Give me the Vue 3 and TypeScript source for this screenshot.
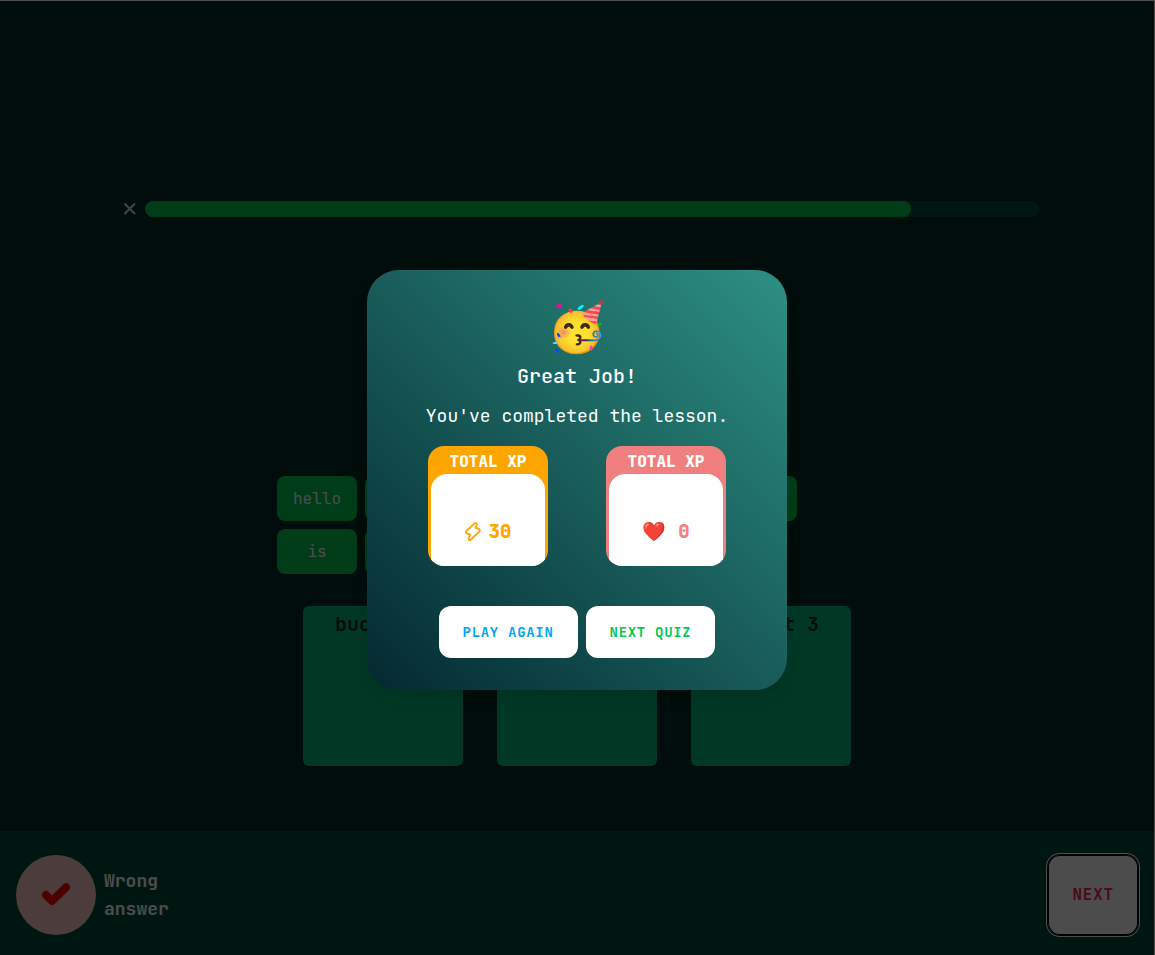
<script setup lang="ts">
import { ref } from 'vue'

interface Stat {
  id: string
  label: string
  value: number
  tone: 'xp' | 'hearts'
}

const words = ref<string[]>(['hello', 'world', 'my', 'name', 'a', 'the', 'is', 'good'])
const buckets = ref<string[]>(['bucket 1', 'bucket 2', 'bucket 3'])
const answered = ref(6)
const questionCount = 7
const stats: Stat[] = [
  { id: 'xp', label: 'TOTAL XP', value: 30, tone: 'xp' },
  { id: 'hearts', label: 'TOTAL XP', value: 0, tone: 'hearts' },
]
</script>

<template>
  <div class="page">
    <header class="progress">
      <button class="close" type="button" aria-label="Close lesson">
        <svg width="14" height="14" viewBox="0 0 14 14" aria-hidden="true">
          <path d="M1.500 1.500 12 12M12 1.500 1.500 12" />
        </svg>
      </button>
      <div class="track" role="progressbar" :aria-valuenow="answered" :aria-valuemax="questionCount">
        <div class="fill" :style="{ width: (answered / questionCount) * 100 + '%' }"></div>
      </div>
    </header>

    <main class="board">
      <div class="words">
        <button v-for="word in words" :key="word" class="word" type="button">{{ word }}</button>
      </div>
      <div class="buckets">
        <section v-for="bucket in buckets" :key="bucket" class="bucket">{{ bucket }}</section>
      </div>
    </main>

    <footer class="result">
      <span class="badge">
        <svg width="32" height="32" viewBox="0 0 32 32" aria-hidden="true">
          <path d="M6 16 12 22 26 8.300" />
        </svg>
      </span>
      <p class="verdict">Wrong answer</p>
      <button class="next" type="button">NEXT</button>
    </footer>

    <div class="overlay">
      <div class="modal" role="dialog" aria-modal="true" aria-labelledby="modal-title">
        <div class="party">🥳</div>
        <h1 id="modal-title" class="title">Great Job!</h1>
        <p class="subtitle">You've completed the lesson.</p>
        <div class="stats">
          <div v-for="stat in stats" :key="stat.id" class="stat" :class="stat.tone">
            <h2 class="stat-label">{{ stat.label }}</h2>
            <div class="stat-value">
              <svg v-if="stat.tone === 'xp'" class="bolt" width="16" height="20" viewBox="0 0 16 20" aria-hidden="true">
                <path d="M9.700 1.300 1.200 9Q.1 10.300 1.400 11.200L5.100 12.700 3.700 16.800Q3.700 18.900 5.500 17.900L14.500 9.300Q15.500 8 14.200 7.200L10.600 5.700 11.900 2.500Q11.700 .2 9.700 1.300Z" />
              </svg>
              <span v-else class="heart">❤️</span>
              <span>{{ stat.value }}</span>
            </div>
          </div>
        </div>
        <div class="actions">
          <button class="action again" type="button">PLAY AGAIN</button>
          <button class="action quiz" type="button">NEXT QUIZ</button>
        </div>
      </div>
    </div>
  </div>
</template>

<style>
body {
  margin: 0;
}
</style>

<style scoped>
.page {
  position: relative;
  box-sizing: border-box;
  display: flex;
  flex-direction: column;
  min-height: 100vh;
  border-top: 1px solid #fff;
  border-right: 1px solid #fff;
  background: #002c22;
  color: #fff;
  font-family: 'JetBrains Mono', 'DejaVu Sans Mono', 'Noto Color Emoji', monospace;
}

button {
  border: 0;
  font-family: inherit;
  cursor: pointer;
}

.progress {
  display: flex;
  align-items: center;
  width: 80%;
  height: 16px;
  margin: 200px auto 0;
}

.close {
  display: grid;
  place-items: center;
  width: 30px;
  padding: 0;
  background: none;
}

.close path {
  fill: none;
  stroke: #e5e5e5;
  stroke-width: 2;
}

.track {
  flex: 1;
  height: 16px;
  border-radius: 8px;
  background: #004f3b;
}

.fill {
  height: 100%;
  border-radius: 8px;
  background: #00c951;
}

.board {
  display: flex;
  flex-direction: column;
  align-items: center;
  gap: 32px;
  margin-top: 259px;
}

.words {
  display: flex;
  flex-wrap: wrap;
  gap: 8px;
  width: 600px;
}

.word {
  width: 80px;
  height: 45px;
  padding: 0;
  border-radius: 8px;
  background: #00c951;
  color: #fff;
  font-size: 16px;
}

.buckets {
  display: flex;
  gap: 34px;
}

.bucket {
  box-sizing: border-box;
  width: 160px;
  height: 160px;
  padding-top: 4px;
  border-radius: 6px;
  background: #00bc7d;
  color: #002c22;
  font-size: 20px;
  font-weight: 700;
  line-height: 28px;
  text-align: center;
}

.result {
  display: flex;
  align-items: center;
  gap: 8px;
  margin-top: auto;
  padding: 24px 16px 20px;
  background: #004f3b;
}

.badge {
  display: grid;
  place-items: center;
  width: 80px;
  height: 80px;
  border-radius: 50%;
  background: #ffc9c9;
}

.badge path {
  fill: none;
  stroke: #f00;
  stroke-width: 8;
  stroke-linecap: round;
  stroke-linejoin: round;
}

.verdict {
  width: 72px;
  margin: 0;
  font-size: 18px;
  font-weight: 700;
  line-height: 28px;
}

.next {
  height: 80px;
  margin-left: auto;
  padding: 0 24px 2px;
  border-radius: 12px;
  background: #fff;
  box-shadow: inset 0 0 0 1px #000, 0 0 0 1px #000, 0 0 0 2px #fff;
  color: #ff2056;
  font-size: 16px;
  font-weight: 700;
  letter-spacing: 0.05em;
}

.overlay {
  position: absolute;
  inset: -1px -1px 0 0;
  display: flex;
  align-items: center;
  justify-content: center;
  padding: 5px 1px 0 0;
  background: rgba(0, 0, 0, 0.7);
}

.modal {
  box-sizing: border-box;
  width: 420px;
  padding: 28px 32px 32px;
  border-radius: 32px;
  background: linear-gradient(to top right, #042930, #2d9084);
  box-shadow: 0 10px 15px -3px rgba(0, 0, 0, 0.1);
  text-align: center;
}

.party {
  height: 56px;
  font-size: 48px;
  line-height: 58px;
}

.title {
  margin: 8px 0 0;
  font-size: 20px;
  font-weight: 500;
  line-height: 28px;
}

.subtitle {
  margin: 12px 0 0;
  font-size: 18px;
  line-height: 28px;
}

.stats {
  display: flex;
  justify-content: space-around;
  margin-top: 16px;
}

.stat {
  box-sizing: border-box;
  display: flex;
  flex-direction: column;
  width: 120px;
  height: 120px;
  padding: 4px 3px 0;
  overflow: hidden;
  border-radius: 16px;
}

.xp {
  background: #ffa500;
  color: #ffa500;
}

.hearts {
  background: #f08080;
  color: #f08080;
}

.stat-label {
  margin: 0;
  color: #fff;
  font-size: 16px;
  font-weight: 800;
  line-height: 24px;
}

.stat-value {
  flex: 1;
  display: flex;
  align-items: center;
  justify-content: center;
  gap: 8px;
  padding-top: 24px;
  border-radius: 16px 16px 0 0;
  background: #fff;
  font-size: 19px;
  font-weight: 800;
  line-height: 28px;
}

.hearts .stat-value {
  gap: 12px;
}

.bolt path {
  fill: none;
  stroke: currentColor;
  stroke-width: 1.8;
  stroke-linejoin: round;
}

.actions {
  display: flex;
  justify-content: center;
  gap: 8px;
  margin-top: 40px;
}

.action {
  height: 52px;
  padding: 0 24px;
  border-radius: 12px;
  background: #fff;
  font-size: 14px;
  font-weight: 700;
  letter-spacing: 0.05em;
}

.again {
  color: #00a6f4;
}

.quiz {
  color: #00c951;
}
</style>
